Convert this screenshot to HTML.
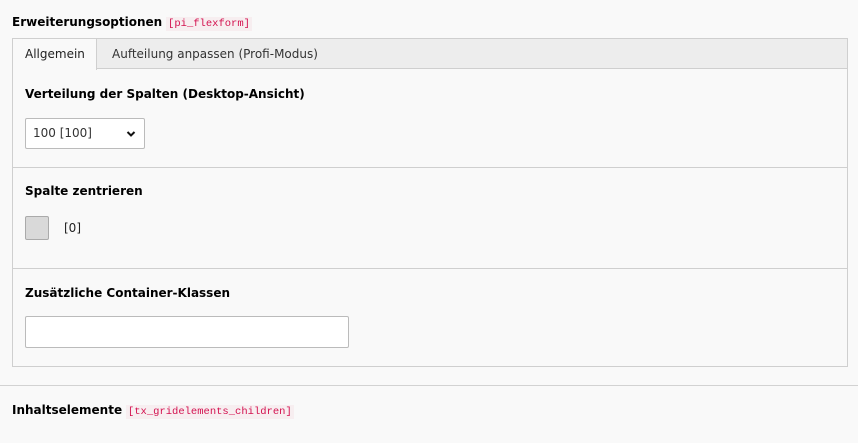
<!DOCTYPE html>
<html><head><meta charset="utf-8"><style>
*{box-sizing:border-box;margin:0;padding:0}
body{width:858px;height:443px;background:#f9f9f9;font-family:"DejaVu Sans",sans-serif;font-size:12px;color:#000;position:relative;overflow:hidden}
.a{position:absolute}
b{font-weight:bold;font-size:12px}
code{font-family:"Liberation Mono",monospace;font-size:10.5px;color:#d3114f;background:#f7eef0;padding:1px 2px}
</style></head><body>
<div class="a" style="left:12px;top:15px"><b>Erweiterungsoptionen</b> <code>[pi_flexform]</code></div>
<div class="a" style="left:12px;top:38px;width:836px;height:329px;border:1px solid #cfcfcf;background:#f9f9f9"></div>
<div class="a" style="left:13px;top:39px;width:834px;height:30px;background:#ededed;border-bottom:1px solid #cfcfcf"></div>
<div class="a" style="left:12px;top:38px;width:85px;height:32px;background:#f9f9f9;border:1px solid #cfcfcf;border-bottom:none"></div>
<div class="a" style="left:25px;top:47px;font-size:12px;color:#222">Allgemein</div>
<div class="a" style="left:112px;top:47px;font-size:12px;color:#333">Aufteilung anpassen (Profi-Modus)</div>
<div class="a" style="left:25px;top:87px"><b>Verteilung der Spalten (Desktop-Ansicht)</b></div>
<div class="a" style="left:25px;top:118px;width:120px;height:31px;border:1px solid #bbb;background:#fff;border-radius:2px;padding:7px 0 0 7px;font-size:12px;color:#333">100 [100]
<svg class="a" style="left:100px;top:11px" width="10" height="8" viewBox="0 0 10 8"><path d="M1.5 2 L5 5.5 L8.5 2" stroke="#111" stroke-width="2" fill="none"/></svg></div>
<div class="a" style="left:13px;top:167px;width:834px;height:1px;background:#cfcfcf"></div>
<div class="a" style="left:25px;top:184px"><b>Spalte zentrieren</b></div>
<div class="a" style="left:25px;top:216px;width:24px;height:24px;border:1px solid #aaa;border-radius:2px;background:#d9d9d9"></div>
<div class="a" style="left:64px;top:221px;font-size:12px;color:#222">[0]</div>
<div class="a" style="left:13px;top:268px;width:834px;height:1px;background:#cfcfcf"></div>
<div class="a" style="left:25px;top:286px"><b>Zusätzliche Container-Klassen</b></div>
<div class="a" style="left:25px;top:316px;width:324px;height:32px;border:1px solid #bbb;background:#fff;border-radius:2px"></div>
<div class="a" style="left:0;top:385px;width:858px;height:1px;background:#d2d2d2"></div>
<div class="a" style="left:12px;top:403px"><b>Inhaltselemente</b> <code>[tx_gridelements_children]</code></div>
</body></html>
